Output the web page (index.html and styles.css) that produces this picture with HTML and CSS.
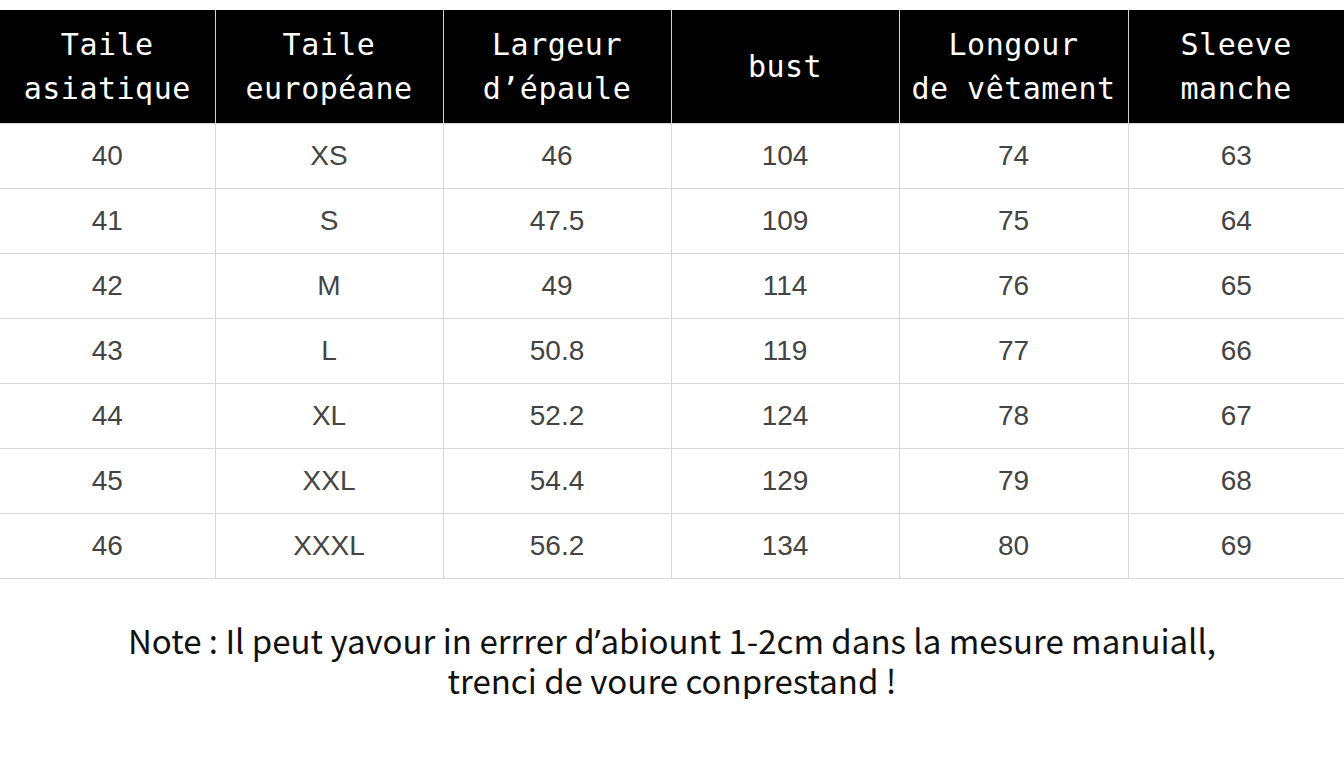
FILE: index.html
```html
<!DOCTYPE html>
<html lang="fr">
<head>
<meta charset="utf-8">
<title>Tableau des tailles</title>
<link rel="stylesheet" href="styles.css">
</head>
<body>
<main class="page">
  <table class="sizes">
    <colgroup>
      <col class="c1"><col class="c2"><col class="c3"><col class="c4"><col class="c5"><col class="c6">
    </colgroup>
    <thead>
      <tr>
        <th>Taile<br>asiatique</th>
        <th>Taile<br>européane</th>
        <th>Largeur<br>d’épaule</th>
        <th>bust</th>
        <th>Longour<br>de vêtament</th>
        <th>Sleeve<br>manche</th>
      </tr>
    </thead>
    <tbody>
      <tr><td>40</td><td>XS</td><td>46</td><td>104</td><td>74</td><td>63</td></tr>
      <tr><td>41</td><td>S</td><td>47.5</td><td>109</td><td>75</td><td>64</td></tr>
      <tr><td>42</td><td>M</td><td>49</td><td>114</td><td>76</td><td>65</td></tr>
      <tr><td>43</td><td>L</td><td>50.8</td><td>119</td><td>77</td><td>66</td></tr>
      <tr><td>44</td><td>XL</td><td>52.2</td><td>124</td><td>78</td><td>67</td></tr>
      <tr><td>45</td><td>XXL</td><td>54.4</td><td>129</td><td>79</td><td>68</td></tr>
      <tr><td>46</td><td>XXXL</td><td>56.2</td><td>134</td><td>80</td><td>69</td></tr>
    </tbody>
  </table>
  <p class="note">Note : Il peut yavour in errrer d<span class="apos">’</span>abiount 1-2cm dans la mesure manuiall,<br>trenci de voure conprestand !</p>
</main>
</body>
</html>
```

FILE: styles.css
```css
* { box-sizing: border-box; }
html, body { margin: 0; padding: 0; background: #ffffff; }
.page { width: 1344px; padding-top: 10px; }
.sizes {
  width: 1344px;
  border-collapse: collapse;
  table-layout: fixed;
}
.c1 { width: 215px; }
.c2 { width: 228px; }
.c3 { width: 228px; }
.c4 { width: 228px; }
.c5 { width: 229px; }
.c6 { width: 216px; }
.sizes th {
  background: #000000;
  color: #ffffff;
  font-family: "DejaVu Sans Mono", "Liberation Mono", monospace;
  font-weight: normal;
  font-size: 30px;
  line-height: 44px;
  height: 113px;
  padding: 2px 0 0;
  text-align: center;
  vertical-align: middle;
  border-left: 1px solid #d0d0d0;
  border-right: 1px solid #d0d0d0;
  letter-spacing: 0.5px;
}
.sizes th:first-child { border-left: none; }
.sizes th:last-child { border-right: none; }
.sizes td {
  height: 65px;
  padding: 0;
  text-align: center;
  vertical-align: middle;
  font-family: "Liberation Sans", Arial, sans-serif;
  font-size: 28px;
  color: #444444;
  border: 1px solid #d8d8d8;
}
.sizes td:first-child { border-left: none; }
.sizes td:last-child { border-right: none; }
.note {
  margin: 42px 0 0;
  text-align: center;
  font-family: "Noto Sans CJK SC", "Noto Sans", sans-serif;
  font-size: 33px;
  line-height: 38px;
  color: #111111;
}
.apos { font-family: "Noto Sans", "DejaVu Sans", sans-serif; }
```
